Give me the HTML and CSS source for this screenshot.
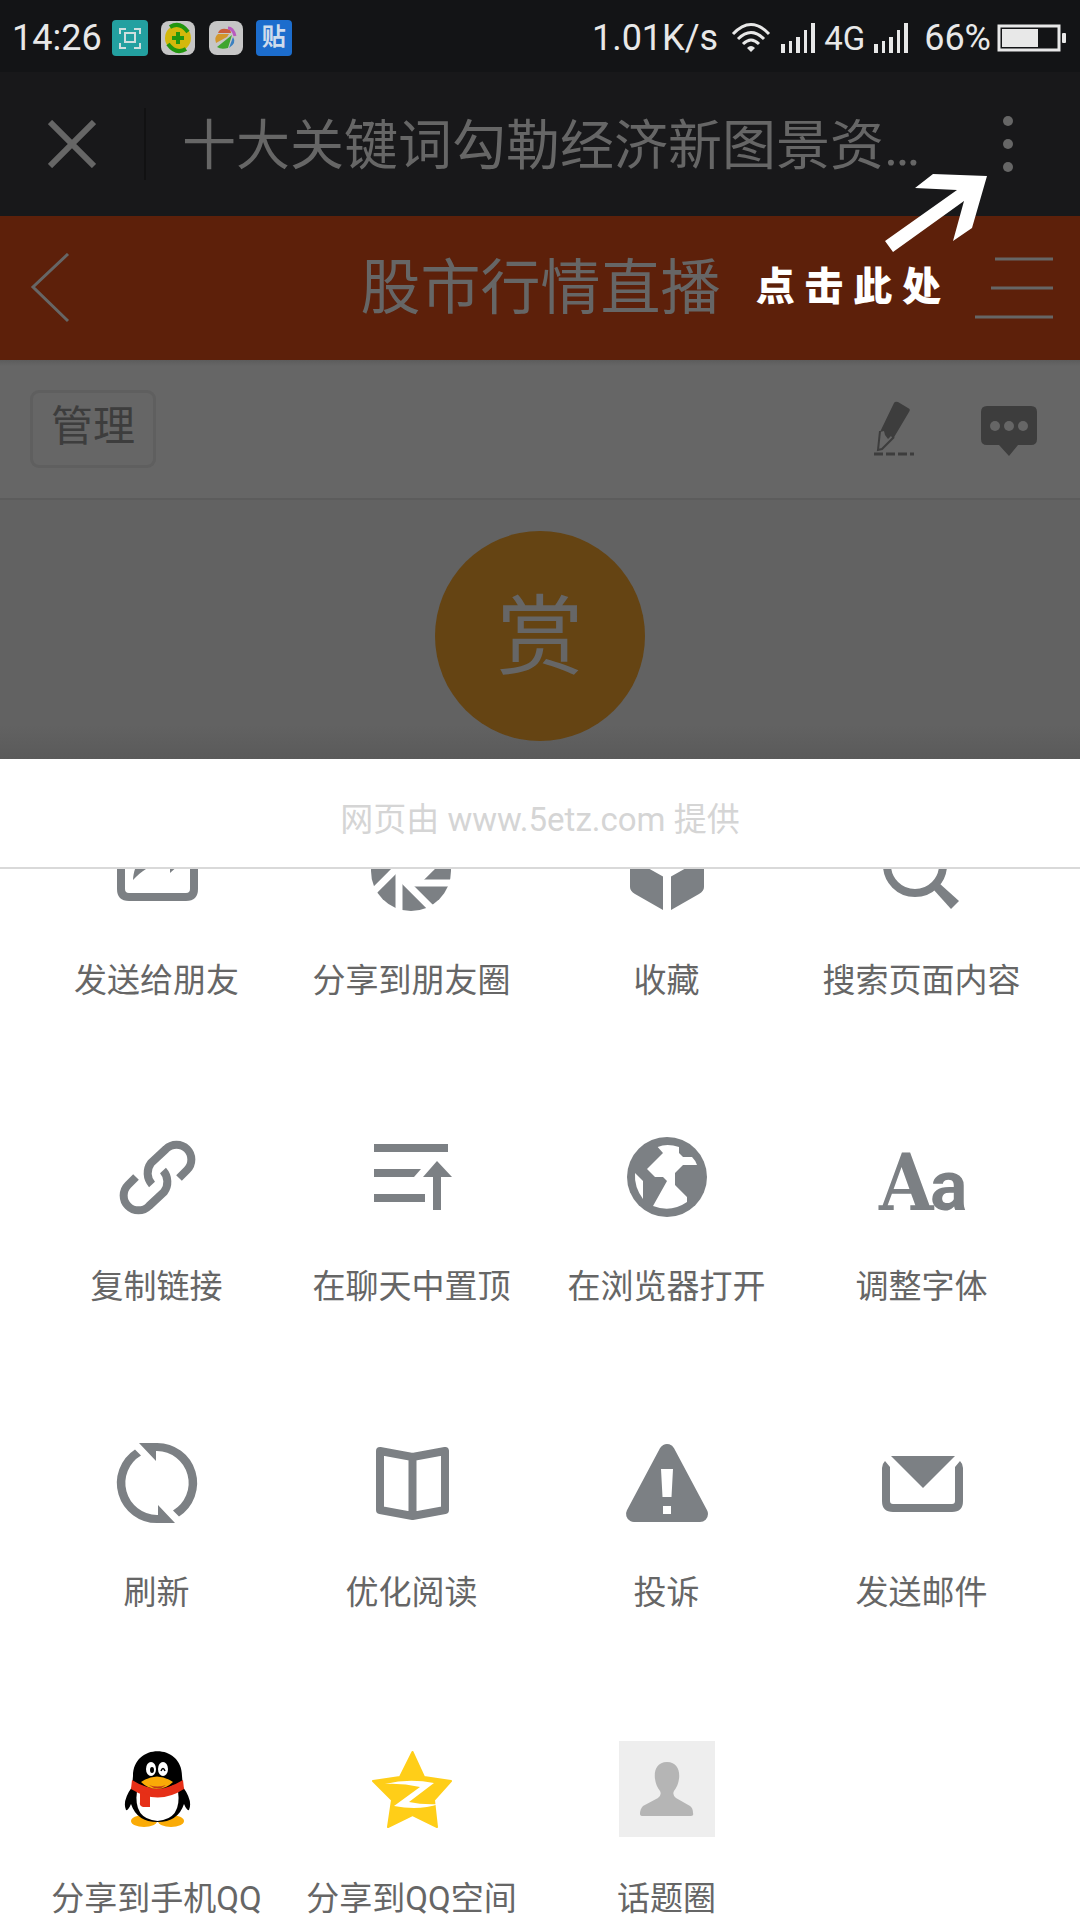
FILE: index.html
```html
<!DOCTYPE html>
<html lang="zh-CN">
<head>
  <meta charset="utf-8">
  <meta name="viewport" content="width=device-width, initial-scale=1">
  <title>股市行情直播</title>
  <link rel="stylesheet" href="styles.css">
</head>
<body>

<div class="status-bar">
  <span class="time">14:26</span>
  <div class="apps">
    <svg width="36" height="36" viewBox="0 0 36 36">
      <rect width="36" height="36" rx="4" fill="#23a0a0"/>
      <path d="M8 14V9h6M22 9h6v5M28 23v5h-6M14 28H8v-5" fill="none" stroke="#cfdede" stroke-width="2"/>
      <rect x="13" y="13" width="10" height="9" fill="none" stroke="#cfdede" stroke-width="2"/>
    </svg>
    <svg width="36" height="36" viewBox="0 0 36 36">
      <rect x="1" y="1" width="34" height="34" rx="8" fill="#c6c6c6"/>
      <circle cx="18" cy="18" r="13" fill="#d3b80c"/>
      <path d="M10 7Q20 1 28 12M26 29Q16 35 8 24" fill="none" stroke="#22960f" stroke-width="4"/>
      <path d="M18 12v12M12 18h12" stroke="#22960f" stroke-width="4"/>
    </svg>
    <svg width="36" height="36" viewBox="0 0 36 36">
      <rect x="1" y="1" width="34" height="34" rx="8" fill="#c6c6c6"/>
      <path d="M10 13q2-5 8-4 5 0 5 4z" fill="#cb5d3a"/>
      <path d="M8 23q-2-6 2-9h11l-2 3z" fill="#d3972c"/>
      <path d="M24 15L9 27q4 3 11 1z" fill="#3fa52f"/>
      <path d="M25 17q4 6-4 11z" fill="#3a80c0"/>
      <path d="M20 8q5 0 7 8" fill="none" stroke="#b959be" stroke-width="3"/>
    </svg>
    <span class="tie">贴</span>
  </div>
  <span class="speed">1.01K/s</span>
  <svg class="wifi" width="40" height="32" viewBox="0 0 40 32">
    <g fill="none" stroke="#e8e8e8" stroke-width="3">
      <path d="M2 12Q20-7 38 12M7 17Q20 4 33 17M12 22Q20 14 28 22"/>
    </g>
    <path d="M20 30l-4-4q4-4 8 0z" fill="#e8e8e8"/>
  </svg>
  <svg class="signal" width="34" height="32" viewBox="0 0 34 32" fill="#e8e8e8">
    <path d="M0 22h4v9H0zM8 19h3v12H8zM15 15h4v16h-4zM23 8h3v23h-3zM30 1h4v30h-4z"/>
  </svg>
  <span class="net">4G</span>
  <svg class="signal" width="34" height="32" viewBox="0 0 34 32" fill="#e8e8e8">
    <path d="M0 22h4v9H0zM8 19h3v12H8zM15 15h4v16h-4zM23 8h3v23h-3zM30 1h4v30h-4z"/>
  </svg>
  <span class="percent">66%</span>
  <svg class="battery" width="70" height="28" viewBox="0 0 70 28">
    <rect x="2" y="2" width="60" height="24" fill="none" stroke="#e8e8e8" stroke-width="3"/>
    <rect x="5" y="5" width="36" height="18" fill="#e8e8e8"/>
    <rect x="65" y="9" width="4" height="10" rx="1" fill="#e8e8e8"/>
  </svg>
</div>

<!-- browser bar -->
<header class="nav-bar">
  <button class="close" aria-label="关闭">
    <svg width="48" height="48" viewBox="0 0 48 48"><path d="M2 2l44 44M46 2L2 46" stroke="#666" stroke-width="6"/></svg>
  </button>
  <h1>十大关键词勾勒经济新图景资…</h1>
  <button class="more" aria-label="更多">
    <svg width="10" height="58" viewBox="0 0 10 58" fill="#666"><circle cx="5" cy="6" r="5"/><circle cx="5" cy="29" r="5"/><circle cx="5" cy="52" r="5"/></svg>
  </button>
</header>

<header class="page-head">
  <a href="#" class="back" aria-label="返回">
    <svg width="40" height="70" viewBox="0 0 40 70"><path d="M38 1L3 34l35 34" fill="none" stroke="#666" stroke-width="3"/></svg>
  </a>
  <h2>股市行情直播</h2>
  <button class="menu" aria-label="菜单">
    <svg width="78" height="62" viewBox="0 0 78 62"><path d="M20 2H78M16 31H78M0 60H78" stroke="#666" stroke-width="3"/></svg>
  </button>
</header>

<div class="toolbar">
  <button class="manage">管理</button>
  <button class="edit" aria-label="编辑">
    <svg width="40" height="56" viewBox="0 0 40 56">
      <path d="M20 2q1-2 4-1l10 6q3 1 1 4L19 38l-2-3-3 3-3-4-1-4-4 1z" fill="#3d3d3d"/>
      <path d="M6 30L4 49l4-1 12-12" fill="none" stroke="#3d3d3d" stroke-width="2"/>
      <path d="M0 53h40" stroke="#3d3d3d" stroke-width="3" stroke-dasharray="9 3"/>
    </svg>
  </button>
  <button class="chat" aria-label="评论">
    <svg width="58" height="52" viewBox="0 0 58 52">
      <path d="M7 1h44q6 0 6 6v27q0 6-6 6H38L29 51 19 40H7q-6 0-6-6V7q0-6 6-6z" fill="#3d3d3d"/>
      <g fill="#666"><circle cx="15" cy="21" r="5"/><circle cx="29" cy="21" r="5"/><circle cx="43" cy="21" r="5"/></g>
    </svg>
  </button>
</div>

<div class="reward">
  <button>赏</button>
</div>

<!-- hint over the bars -->
<div class="hint">
  <svg width="102" height="78" viewBox="0 0 102 78"><path d="M102 2L48 0 30 14l42 2L0 67l8 11 71-51-11 40 19-13z" fill="#fff"/></svg>
  <p>点 击 此 处</p>
</div>

<section class="sheet">
  <p class="source">网页由 www.5etz.com 提供</p>
  <div class="scroll">
    <ul>
      <li><button>
        <svg viewBox="0 0 96 96">
          <path d="M30 20H20Q12 20 12 28V66Q12 74 20 74H77Q85 74 85 66V40" fill="none" stroke="#7c8084" stroke-width="8"/>
          <path d="M24 57C25 37 37 28 61 26V14L81 32 61 50V40C48 39 36 44 24 57z"/>
        </svg>
        <span>发送给朋友</span>
      </button></li>
      <li><button>
        <svg viewBox="0 0 96 96">
          <circle cx="47" cy="48" r="40"/>
          <circle cx="47" cy="48" r="15" fill="#fff"/>
          <g stroke="#fff" stroke-width="7">
            <path d="M35 46v46"/>
            <path d="M35 46v46" transform="rotate(45 47 48)"/>
            <path d="M35 46v46" transform="rotate(90 47 48)"/>
            <path d="M35 46v46" transform="rotate(135 47 48)"/>
            <path d="M35 46v46" transform="rotate(180 47 48)"/>
            <path d="M35 46v46" transform="rotate(225 47 48)"/>
            <path d="M35 46v46" transform="rotate(270 47 48)"/>
            <path d="M35 46v46" transform="rotate(315 47 48)"/>
          </g>
        </svg>
        <span>分享到朋友圈</span>
      </button></li>
      <li><button>
        <svg viewBox="0 0 96 96">
          <path d="M48 8l34 19-34 19-34-19z"/>
          <path d="M11 35l33 18.500V87L16 71q-5-3-5-7zM85 35L52 53.500V87l28-16q5-3 5-7z"/>
        </svg>
        <span>收藏</span>
      </button></li>
      <li><button>
        <svg viewBox="0 0 96 96">
          <circle cx="41" cy="42" r="28" fill="none" stroke="#7c8084" stroke-width="8"/>
          <path d="M59 66l18 20 8-8-20-18z"/>
        </svg>
        <span>搜索页面内容</span>
      </button></li>

      <li><button>
        <svg viewBox="0 0 96 96">
          <g fill="none" stroke="#7c8084" stroke-width="8">
            <path d="M43 55.500A17 17 0 0 1 42 34L57 20A14 14 0 0 1 78 41L70 49"/>
            <path d="M43 55.500A17 17 0 0 1 42 34L57 20A14 14 0 0 1 78 41L70 49" transform="rotate(180 48.500 48.500)"/>
          </g>
        </svg>
        <span>复制链接</span>
      </button></li>
      <li><button>
        <svg viewBox="0 0 96 96">
          <path d="M10 15h74v8H10zM10 40h47l-7 8H10zM10 65h51v8H10z"/>
          <path d="M73 32l15 16H77v33h-8V48H59z"/>
        </svg>
        <span>在聊天中置顶</span>
      </button></li>
      <li><button>
        <svg viewBox="0 0 96 96">
          <circle cx="48" cy="48" r="40"/>
          <path d="M38.700 18Q48 14 60 18v6l4 4h9q4 4 5 8H64l-8 8v12l12 12v5q-16 11-34 4l14-25-4-4h-8l-8-8 16-16zM16 44l8 8v18Q15 58 16 44z" fill="#fff"/>
        </svg>
        <span>在浏览器打开</span>
      </button></li>
      <li><button>
        <svg viewBox="0 0 96 96">
          <text y="81"><tspan class="big-a" x="5">A</tspan><tspan class="small-a" x="56">a</tspan></text>
        </svg>
        <span>调整字体</span>
      </button></li>

      <li><button>
        <svg viewBox="0 0 96 96">
          <path d="M30 8H48A40 40 0 0 1 70 81.500L64 75.500A32 32 0 0 0 48 16h-1v10z"/>
          <path d="M30 8H48A40 40 0 0 1 70 81.500L64 75.500A32 32 0 0 0 48 16h-1v10z" transform="rotate(180 48 48)"/>
        </svg>
        <span>刷新</span>
      </button></li>
      <li><button>
        <svg viewBox="0 0 96 96">
          <path d="M16 16l32.500 6L81 16v59l-32.500 6L16 75zM48.500 22v59" fill="none" stroke="#7c8084" stroke-width="8" stroke-linejoin="round"/>
        </svg>
        <span>优化阅读</span>
      </button></li>
      <li><button>
        <svg viewBox="0 0 96 96">
          <path d="M48 17L15 79h66z" stroke="#7c8084" stroke-width="16" stroke-linejoin="round"/>
          <path d="M42 34h12l-1.500 28h-9zM44 71h8v8h-8z" fill="#fff"/>
        </svg>
        <span>投诉</span>
      </button></li>
      <li><button>
        <svg viewBox="0 0 96 96">
          <path d="M17 21h64L49 53z"/>
          <path d="M11 26l5 6v34q0 3 3 3h59q3 0 3-3V32l5-6q3 3 3 7v33q0 11-11 11H19Q8 77 8 66V33q0-4 3-7z"/>
        </svg>
        <span>发送邮件</span>
      </button></li>

      <li><button>
        <svg viewBox="0 0 96 96">
          <ellipse cx="35" cy="80" rx="13" ry="6" fill="#faab07"/>
          <ellipse cx="62" cy="80" rx="13" ry="6" fill="#faab07"/>
          <path d="M24 35C24 2 73 2 73 35L74 46Q84 60 80 69q-2 1-5-6-6 18-26.500 18T22 63q-3 7-5 6-4-9 6-23z" fill="#000"/>
          <path d="M28 50Q24 78 48.500 80 73 78 69 50z" fill="#fff"/>
          <path d="M23 39q25 16 51 0l1 9q-26 17-53 0z" fill="#e62f17"/>
          <path d="M31 51l10 3v12h-7q-4-1-3-5z" fill="#e62f17"/>
          <path d="M24 37q25 22 49 0z" fill="#000"/>
          <ellipse cx="42" cy="28" rx="5" ry="7" fill="#fff"/>
          <ellipse cx="54" cy="28" rx="5" ry="7" fill="#fff"/>
          <ellipse cx="43" cy="29" rx="2" ry="3" fill="#000"/>
          <path d="M52 30q2-5 4 0" fill="none" stroke="#000" stroke-width="1.500"/>
          <path d="M32 41q16-11 32 0-7 7-16 7t-16-7z" fill="#faab07"/>
          <path d="M40 44q8 3 17 0-8 7-17 0z" fill="#c23b1a"/>
        </svg>
        <span>分享到手机QQ</span>
      </button></li>
      <li><button>
        <svg viewBox="0 0 96 96">
          <path d="M48.500 11L60 36l27 4-17 19 3 27-24.500-12L24 86l4-27L9 40l27-4z" fill="#ffce18" stroke="#ffce18" stroke-width="2" stroke-linejoin="round"/>
          <path d="M21 43q24-6 49-1L45 61q14 3 30 2-20 7-45 2l26-19q-18-4-35-3z" fill="#fff"/>
        </svg>
        <span>分享到QQ空间</span>
      </button></li>
      <li><button>
        <svg viewBox="0 0 96 96">
          <rect width="96" height="96" fill="#eee"/>
          <path d="M48 21C32 21 34 42 41 50q2 4-2 7L24 65q-3 3-3 8 0 2 3 2h48q3 0 2-3 0-5-3-7L57 57q-4-3-2-7c7-8 9-29-7-29z" fill="#b5b5b5"/>
        </svg>
        <span>话题圈</span>
      </button></li>
    </ul>
  </div>
</section>

</body>
</html>
```
FILE: styles.css
```css
* {
  box-sizing: border-box;
}

body {
  position: relative;
  display: flex;
  flex-direction: column;
  min-height: 100vh;
  margin: 0;
  background: #626262;
  font-family: Roboto, "Noto Sans CJK SC", sans-serif;
}

h1, h2, p, ul {
  margin: 0;
  padding: 0;
  font-weight: normal;
}

button {
  padding: 0;
  border: 0;
  background: none;
  font-family: inherit;
}

svg {
  display: block;
}

/* phone status bar */
.status-bar {
  display: flex;
  align-items: center;
  height: 72px;
  padding: 4px 13px 0 12px;
  background: #131416;
  color: #e8e8e8;
  font-size: 36px;
}

.apps {
  display: flex;
  gap: 12px;
  margin-left: 10px;
}

.tie {
  width: 36px;
  height: 36px;
  border-radius: 4px;
  background: #1c6dcd;
  color: #cfdcec;
  font-size: 24px;
  font-weight: bold;
  line-height: 34px;
  text-align: center;
}

.speed {
  margin-left: auto;
}

.wifi {
  margin: 0 10px 0 13px;
}

.net {
  margin: 0 9px;
  font-size: 33px;
}

.percent {
  margin: 0 6px 0 16px;
}

/* browser bar */
.nav-bar {
  display: flex;
  align-items: center;
  height: 144px;
  background: #18181a;
  color: #666;
}

.close {
  display: flex;
  align-items: center;
  width: 146px;
  height: 72px;
  padding-left: 48px;
  border-right: 2px solid #111112;
}

.nav-bar h1 {
  flex: 1;
  padding: 0 0 6px 36px;
  font-size: 54px;
  white-space: nowrap;
}

.more {
  padding: 0 67px;
}

/* page header */
.page-head {
  display: flex;
  align-items: center;
  justify-content: space-between;
  height: 144px;
  padding: 0 27px 0 30px;
  background: #5d200a;
  color: #666;
}

.page-head h2 {
  padding-bottom: 12px;
  font-size: 60px;
}

.back {
  width: 76px;
}

.toolbar {
  display: flex;
  align-items: center;
  height: 140px;
  padding: 0 42px 0 30px;
  border-bottom: 2px solid #5c5c5c;
  background: linear-gradient(#5c5c5c, #666 6px);
}

.manage {
  height: 78px;
  margin-right: auto;
  padding: 0 18px 4px;
  border: 3px solid #5f5f5f;
  border-radius: 9px;
  color: #3d3d3d;
  font-size: 42px;
  line-height: 60px;
}

.edit {
  margin-right: 66px;
}

.chat {
  padding-top: 4px;
}

.reward {
  display: flex;
  justify-content: center;
  height: 259px;
  padding-top: 31px;
  background: linear-gradient(#626262 225px, #5a5a5a);
}

.reward button {
  width: 210px;
  height: 210px;
  padding-bottom: 12px;
  border-radius: 50%;
  background: #654413;
  color: #666;
  font-size: 87px;
}

.hint {
  position: absolute;
  top: 174px;
  right: 93px;
  display: flex;
  flex-direction: column;
  align-items: flex-end;
  color: #fff;
}

.hint p {
  padding: 5px 46px 0 0;
  font-size: 39px;
  font-weight: 900;
  line-height: 60px;
}

/* share sheet */
.sheet {
  flex: 1;
  background: #fff;
}

.source {
  height: 110px;
  padding-top: 12px;
  border-bottom: 2px solid #d9d9d9;
  color: #d5d5d5;
  font-size: 33px;
  line-height: 98px;
  text-align: center;
}

/* list is scrolled a little, first row goes under the title */
.scroll {
  overflow: hidden;
}

.scroll ul {
  display: grid;
  grid-template-columns: repeat(4, 1fr);
  row-gap: 126px;
  margin-top: -46px;
  padding: 0 31px 0 29px;
  list-style: none;
}

.scroll button {
  display: flex;
  flex-direction: column;
  align-items: center;
  gap: 40px;
  width: 100%;
  color: #666;
  font-size: 33px;
  line-height: 44px;
  white-space: nowrap;
}

.scroll svg {
  width: 96px;
  height: 96px;
  fill: #7c8084;
}

.big-a {
  font: bold 78px "DejaVu Serif Condensed", "DejaVu Serif", serif;
}

.small-a {
  font: bold 70px Roboto, sans-serif;
}
```
